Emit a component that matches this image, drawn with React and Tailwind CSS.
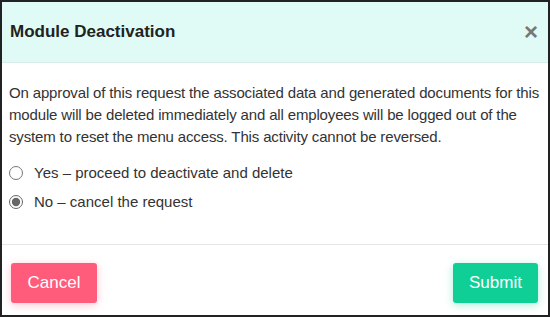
import React, { useState } from "react";

const App = () => {
  const [choice, setChoice] = useState("no");

  return (
    <div className="w-[550px] h-[317px] bg-white border-2 border-[#222] flex flex-col font-['Liberation_Sans',Arial,sans-serif] text-[#333]">
      {/* header */}
      <div className="h-[61px] shrink-0 bg-[#e0fbf6] border-b border-[#d9ece9] flex items-center justify-between pl-[8px] pr-[10px]">
        <h1 className="text-[17px] font-bold text-[#222]">Module Deactivation</h1>
        <button className="text-[#777] text-[24px] font-bold leading-none">×</button>
      </div>

      {/* body */}
      <div className="flex-1 px-[7px] pt-[19px] border-b border-[#e5e5e5]">
        <p className="text-[15px] leading-[22px] tracking-[-0.15px]">
          On approval of this request the associated data and generated documents for this module will be deleted immediately and all employees will be logged out of the system to reset the menu access. This activity cannot be reversed.
        </p>
        <div className="mt-[14px] flex flex-col gap-[6px] text-[15px]">
          <label className="flex items-center gap-[11px]">
            <input
              type="radio"
              name="deact"
              checked={choice === "yes"}
              onChange={() => setChoice("yes")}
              className="w-[14px] h-[14px] accent-[#666]"
            />
            Yes – proceed to deactivate and delete
          </label>
          <label className="flex items-center gap-[11px]">
            <input
              type="radio"
              name="deact"
              checked={choice === "no"}
              onChange={() => setChoice("no")}
              className="w-[14px] h-[14px] accent-[#666]"
            />
            No – cancel the request
          </label>
        </div>
      </div>

      {/* footer */}
      <div className="h-[70px] shrink-0 flex items-start justify-between pt-[18px] pl-[9px] pr-[10px]">
        <button className="w-[86px] h-[40px] rounded-[3px] bg-[#ff5b7b] text-white text-[17px] shadow-[0_2px_8px_rgba(255,91,123,0.35)]">
          Cancel
        </button>
        <button className="w-[85px] h-[40px] rounded-[3px] bg-[#0fcf97] text-white text-[17px] shadow-[0_2px_8px_rgba(15,207,151,0.35)]">
          Submit
        </button>
      </div>
    </div>
  );
};

export default App;
